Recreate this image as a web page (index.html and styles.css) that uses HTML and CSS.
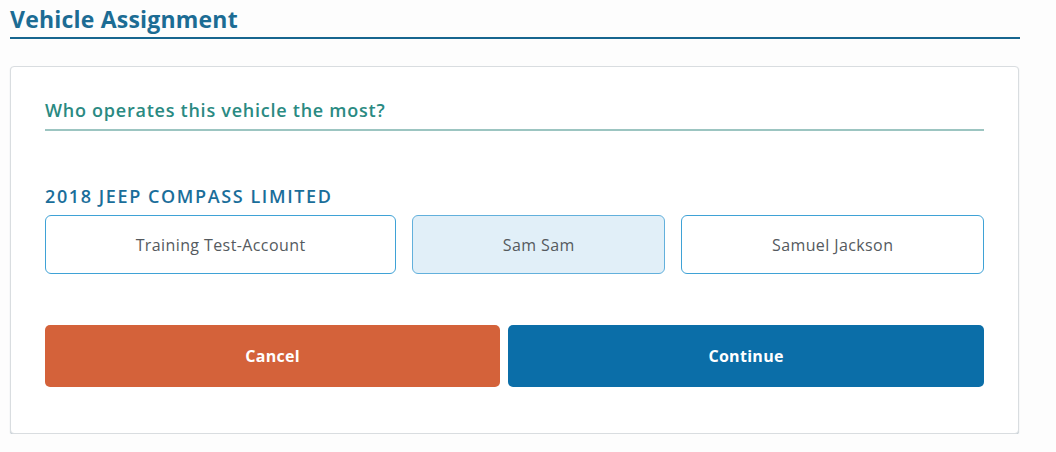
FILE: index.html
```html
<!DOCTYPE html>
<html>
<head>
<meta charset="utf-8">
<link rel="stylesheet" href="styles.css">
</head>
<body>
<div class="page">
  <h1 class="title">Vehicle Assignment</h1>
  <div class="card">
    <h2 class="question">Who operates this vehicle the most?</h2>
    <h3 class="vehicle">2018 JEEP COMPASS LIMITED</h3>
    <div class="options">
      <button class="option">Training Test-Account</button>
      <button class="option selected">Sam Sam</button>
      <button class="option">Samuel Jackson</button>
    </div>
    <div class="actions">
      <button class="btn cancel">Cancel</button>
      <button class="btn continue">Continue</button>
    </div>
  </div>
</div>
</body>
</html>
```
FILE: styles.css
```css
* { box-sizing: border-box; }
html, body { margin: 0; background: #fdfdfd; }
body { font-family: "Open Sans", "Liberation Sans", sans-serif; }
.page { width: 1010px; margin-left: 10px; padding-top: 4px; }
.title {
  margin: 0;
  font-size: 23px;
  font-weight: 700;
  color: #1c6c94;
  line-height: 30px;
  padding-bottom: 3px;
  border-bottom: 2px solid #17668f;
  letter-spacing: 0.2px;
}
.card {
  margin-top: 27px;
  width: 1009px;
  background: #fff;
  border: 1px solid #d9dde0;
  border-radius: 4px;
  box-shadow: 0 1px 1px rgba(120,140,155,0.45);
  padding: 30px 34px 46px 34px;
}
.question {
  margin: 0;
  font-size: 18px;
  font-weight: 600;
  color: #2a8a82;
  line-height: 26px;
  padding-bottom: 6px;
  border-bottom: 2px solid #9cc5c1;
  letter-spacing: 0.75px;
}
.vehicle {
  margin: 54px 0 0 0;
  font-size: 18px;
  font-weight: 600;
  color: #1a6e9a;
  line-height: 22px;
  letter-spacing: 1.6px;
}
.options {
  display: flex;
  gap: 16px;
  margin-top: 8px;
}
.option {
  flex: 1 1 auto;
  height: 59px;
  background: #fff;
  border: 1px solid #3fa2d6;
  border-radius: 6px;
  font-family: inherit;
  font-size: 16px;
  color: #555a5e;
  letter-spacing: 0.4px;
}
.option.selected {
  background: #e1eff8;
  border-color: #62b0dc;
}
.actions {
  display: flex;
  gap: 8px;
  margin-top: 51px;
}
.btn {
  flex: 1 1 auto;
  height: 62px;
  border: none;
  border-radius: 5px;
  font-family: inherit;
  font-size: 16px;
  font-weight: 700;
  color: #fff;
  letter-spacing: 0.3px;
}
.cancel { background: #d4623a; }
.continue { background: #0b6ea8; }
```
